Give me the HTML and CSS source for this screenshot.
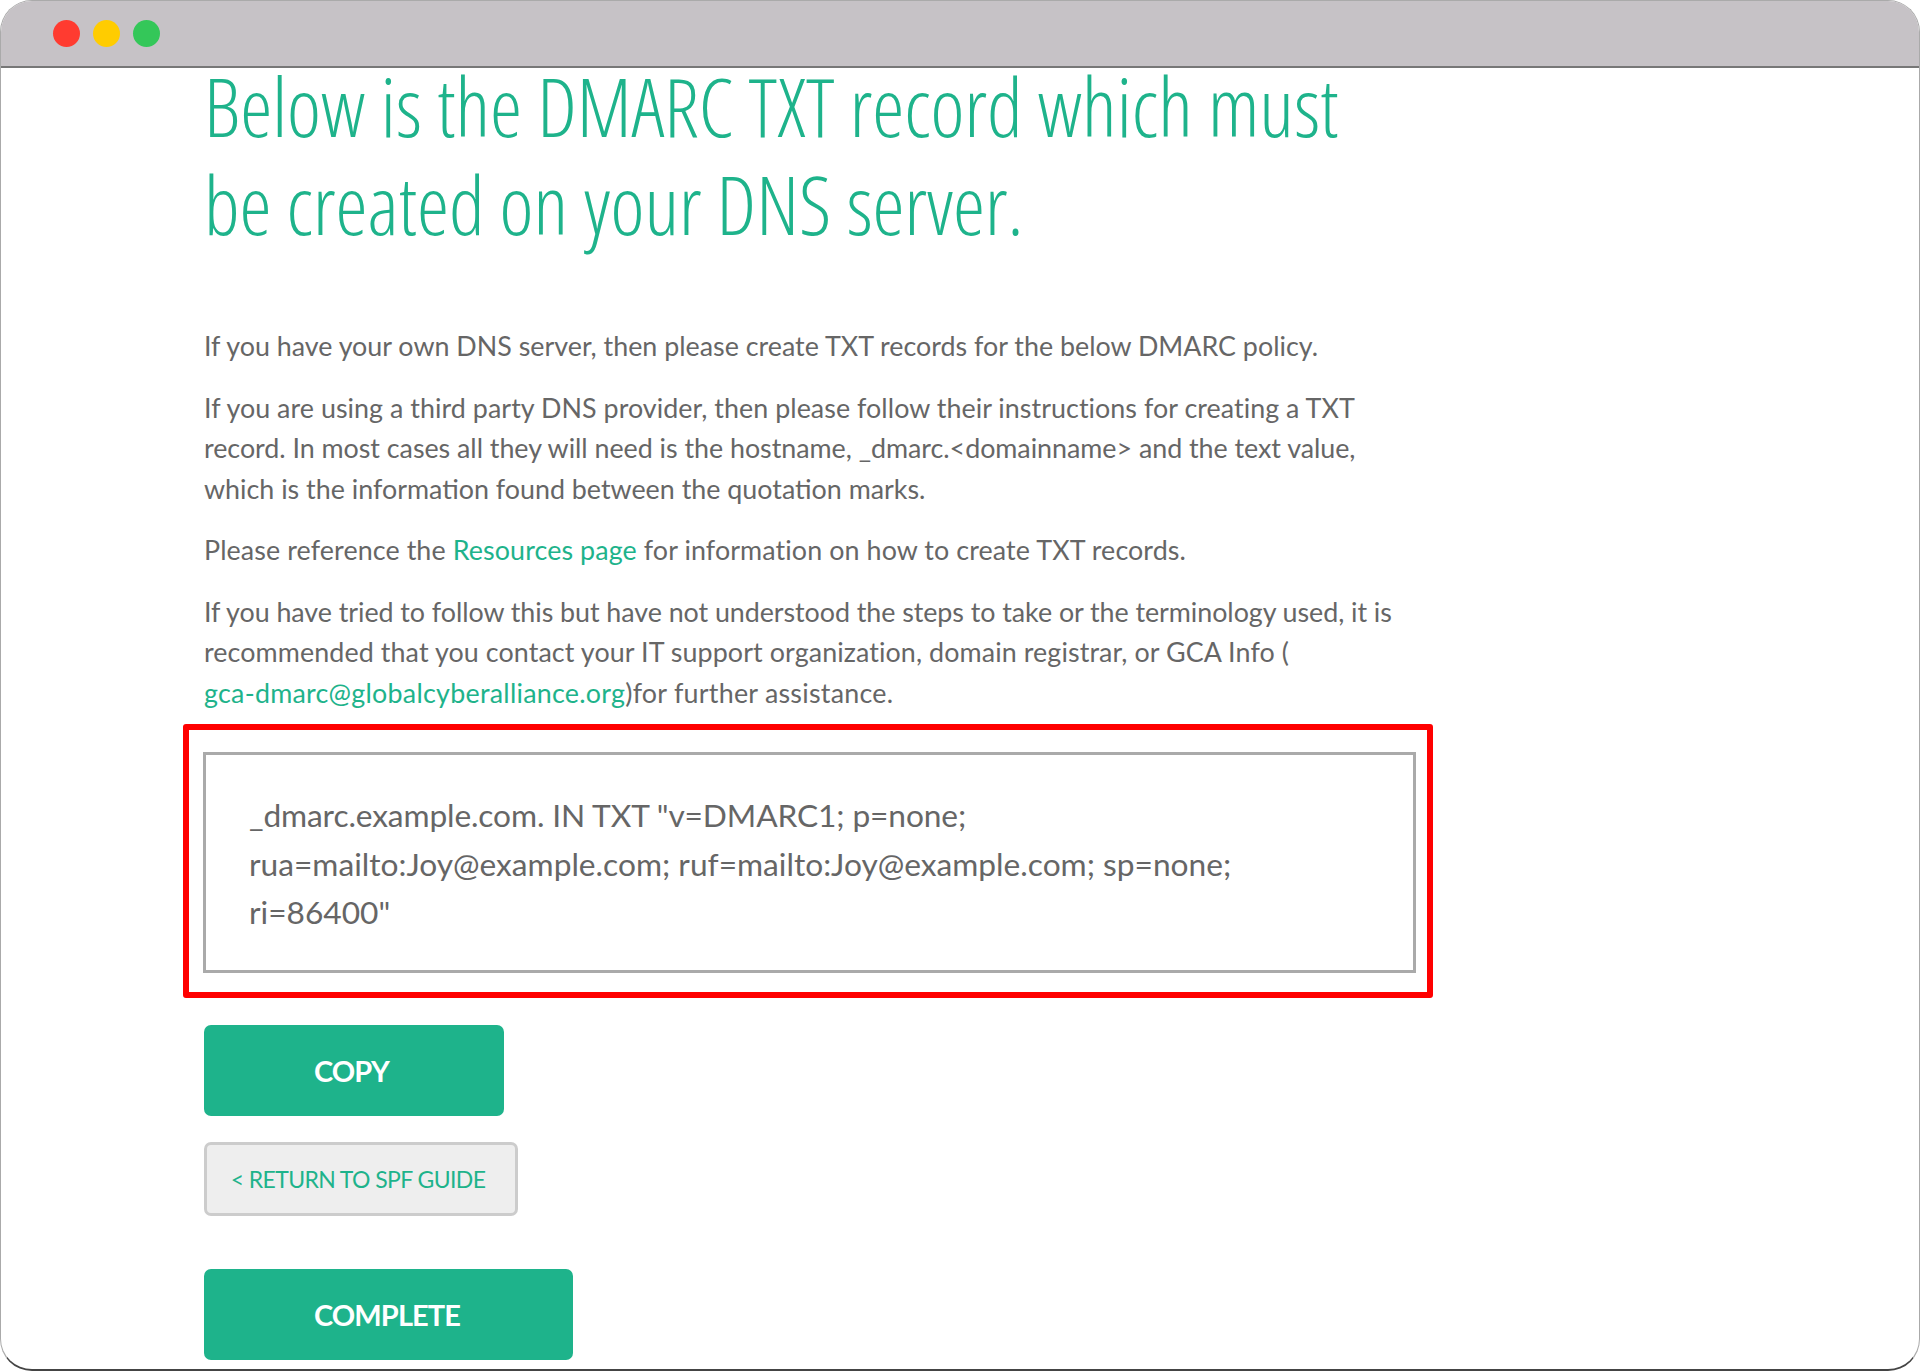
FILE: index.html
```
<!DOCTYPE html>
<html lang="en">
<head>
<meta charset="utf-8">
<title>DMARC TXT record</title>
<link rel="stylesheet" href="styles.css">
</head>
<body>
<div class="window">
  <header class="titlebar">
    <span class="dot dot-red"></span>
    <span class="dot dot-yellow"></span>
    <span class="dot dot-green"></span>
  </header>
  <main class="content">
    <h1 class="title">Below is the DMARC TXT record which must<br>be created on your DNS server.</h1>
    <p class="para">If you have your own DNS server, then please create TXT records for the below DMARC policy.</p>
    <p class="para"><span class="track-xs">If you are using a third party DNS provider, then please follow their instructions for creating a TXT</span><br><span class="track-neg-xs">record. In most cases all they will need is the hostname, _dmarc.&lt;domainname&gt; and the text value,</span><br>which is the information found between the quotation marks.</p>
    <p class="para track-s">Please reference the <a class="link" href="#">Resources page</a> for information on how to create TXT records.</p>
    <p class="para"><span class="track-neg-s">If you have tried to follow this but have not understood the steps to take or the terminology used, it is</span><br><span class="track-s">recommended that you contact your IT support organization, domain registrar, or GCA Info (</span><br><span class="track-m"><a class="link" href="#">gca-dmarc@globalcyberalliance.org</a>)for further assistance.</span></p>
    <div class="highlight">
      <div class="record"><span class="track-neg-m">_dmarc.example.com. IN TXT "v=DMARC1; p=none;</span><br>rua=mailto:Joy@example.com; ruf=mailto:Joy@example.com; sp=none;<br>ri=86400"</div>
    </div>
    <a class="btn btn-copy" href="#">COPY</a>
    <a class="btn-return" href="#">&lt; RETURN TO SPF GUIDE</a>
    <a class="btn btn-complete" href="#">COMPLETE</a>
  </main>
</div>
</body>
</html>
```
FILE: styles.css
```
* { box-sizing: border-box; }
html, body { margin: 0; padding: 0; background: #fff; }
.window {
  width: 1920px;
  height: 1371px;
  border: 1px solid #aaa;
  border-bottom: 2px solid #444;
  border-radius: 32px;
  overflow: hidden;
  background: #fff;
  font-family: "Lato", "Liberation Sans", sans-serif;
  color: #666;
}
.titlebar {
  height: 67px;
  background: #c6c2c6;
  border-bottom: 2px solid #777;
  display: flex;
  align-items: center;
  gap: 13px;
  padding-left: 52px;
}
.dot { width: 27px; height: 27px; border-radius: 50%; }
.dot-red { background: #ff3b30; }
.dot-yellow { background: #ffcc00; }
.dot-green { background: #34c759; }
.content { padding-left: 203px; width: 1500px; }
.title {
  margin: -11px 0 73px;
  font-family: "Open Sans", sans-serif;
  font-weight: 300;
  font-stretch: 75%;
  font-size: 81px;
  line-height: 98px;
  color: #1eb38b;
  white-space: nowrap;
}
.para {
  margin: 0 0 21px;
  font-size: 26.85px;
  line-height: 40.5px;
  white-space: nowrap;
}
.track-xs { letter-spacing: 0.05px; }
.track-s { letter-spacing: 0.1px; }
.track-m { letter-spacing: 0.25px; }
.track-neg-xs { letter-spacing: -0.03px; }
.track-neg-s { letter-spacing: -0.05px; }
.track-neg-m { letter-spacing: -0.12px; }
.link { color: #1eb38b; text-decoration: none; }
.highlight {
  width: 1250px;
  margin: -10px 0 27px -21px;
  border: 6px solid #f00;
  border-radius: 3px;
  padding: 22px 11px 19px 14px;
}
.record {
  border: 3px solid #aaa;
  padding: 36px 43px 33px;
  font-size: 31.7px;
  line-height: 48.5px;
  white-space: nowrap;
}
.btn {
  display: flex;
  align-items: center;
  height: 91px;
  padding-left: 110px;
  border-radius: 7px;
  background: #1eb38b;
  color: #fff;
  font-weight: 700;
  font-size: 29px;
  letter-spacing: -0.9px;
  text-decoration: none;
}
.btn-copy { width: 300px; margin-bottom: 26px; }
.btn-complete { width: 369px; }
.btn-return {
  display: flex;
  align-items: center;
  justify-content: center;
  width: 314px;
  height: 74px;
  margin-bottom: 53px;
  padding-right: 6px;
  background: #eee;
  border: 3px solid #ccc;
  border-radius: 7px;
  color: #1eb38b;
  font-size: 23px;
  letter-spacing: -0.6px;
  text-decoration: none;
}
```
